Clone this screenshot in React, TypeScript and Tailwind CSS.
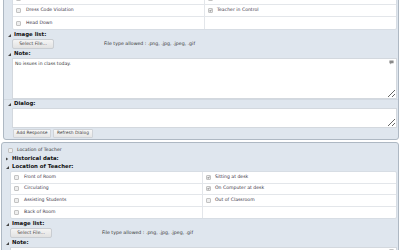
import React from "react";

const FONT = { fontFamily: '"DejaVu Sans", Verdana, sans-serif' };

function Box({ checked = false }: { checked?: boolean }) {
  return (
    <span className="inline-flex h-[5px] w-[5px] shrink-0 items-center justify-center rounded-[1px] border border-[#c2c2c2] bg-[#eeeeee]">
      {checked && (
        <svg viewBox="0 0 6 6" className="h-[5px] w-[5px]">
          <path d="M1 3.2 L2.4 4.6 L5 1.4" fill="none" stroke="#333" strokeWidth="1.2" />
        </svg>
      )}
    </span>
  );
}

function Arrow({ open = true }: { open?: boolean }) {
  return open ? (
    <svg viewBox="0 0 4 4" className="h-[3px] w-[3px] shrink-0">
      <path d="M4 0 L4 4 L0 4 Z" fill="#444" />
    </svg>
  ) : (
    <svg viewBox="0 0 4 4" className="h-[4px] w-[3px] shrink-0">
      <path d="M0 0 L3 2 L0 4 Z" fill="#444" />
    </svg>
  );
}

function Label({ text, open = true }: { text: string; open?: boolean }) {
  return (
    <div className="flex h-[8px] items-center gap-[3px] pl-[4px] text-[5.4px] font-bold leading-none text-[#111]">
      <Arrow open={open} />
      <span>{text}</span>
    </div>
  );
}

type Cell = { text: string; checked?: boolean } | null;

function Grid({ rows, rowH }: { rows: [Cell, Cell][]; rowH: string }) {
  return (
    <div className="ml-[8px] mr-[1px] rounded-[2px] border border-[#d7dde4] bg-white">
      {rows.map(([a, b], i) => (
        <div key={i} className={`flex ${rowH} ${i < rows.length - 1 ? "border-b border-[#e3e6ea]" : ""}`}>
          <div className="flex w-[192px] items-center gap-[5px] border-r border-[#e3e6ea] pl-[3px] text-[4.6px] leading-none text-[#3a3346]">
            {a && <Box checked={a.checked} />}
            {a && a.text && <span>{a.text}</span>}
          </div>
          <div className="flex flex-1 items-center gap-[4px] pl-[3px] text-[4.6px] leading-none text-[#3a3346]">
            {b && <Box checked={b.checked} />}
            {b && b.text && <span>{b.text}</span>}
          </div>
        </div>
      ))}
    </div>
  );
}

function FileRow() {
  return (
    <div className="flex h-[10px] items-center pl-[8px]">
      <button className="h-[10px] w-[42px] rounded-[2px] border border-[#c9cdd2] bg-gradient-to-b from-[#f4f4f4] to-[#e2e2e2] text-[4.6px] leading-none text-[#444]">
        Select File...
      </button>
      <span className="ml-[50px] text-[4.7px] leading-none text-[#333]">File type allowed : .png, .jpg, .jpeg, .gif</span>
    </div>
  );
}

function Bubble() {
  return (
    <svg viewBox="0 0 6 6" className="absolute right-[3px] top-[2px] h-[5px] w-[5px]">
      <path d="M0.5 0.5 H5.5 V3.8 H3 L1.6 5.5 V3.8 H0.5 Z" fill="#8a8a8a" />
    </svg>
  );
}

export default function App() {
  return (
    <div className="h-[250px] w-[400px] overflow-hidden bg-white" style={FONT}>
      <div className="-mt-[12px]">
        <div className="ml-[3px] mr-[1px] rounded-b-[3px] border border-[#aeb8c3] bg-[#dfe6ee] pt-[3px]">
          <Grid
            rowH="h-[12px]"
            rows={[
              [{ text: "" }, { text: "" }],
              [{ text: "Dress Code Violation" }, { text: "Teacher in Control", checked: true }],
              [{ text: "Head Down" }, null],
            ]}
          />
          <div className="mt-[1px]">
            <Label text="Image list:" />
          </div>
          <FileRow />
          <div className="mt-[1px]">
            <Label text="Note:" />
          </div>
          <div className="relative ml-[8px] mr-[1px] h-[41px]">
            <textarea
              readOnly
              defaultValue="No issues in class today."
              className="block h-full w-full resize-y border border-[#d3d8de] bg-white px-[2px] py-[2px] text-[4.6px] text-[#333] outline-none"
            />
            <Bubble />
          </div>
          <div className="border-t border-[#d2d9e1]">
            <Label text="Dialog:" />
          </div>
          <div className="ml-[8px] mr-[1px] h-[20px]">
            <textarea readOnly className="block h-full w-full resize-y border border-[#d3d8de] bg-white outline-none" />
          </div>
          <div className="mt-[1px] flex h-[10px] gap-[2px] pb-[1px] pl-[9px]">
            <button className="h-[9px] w-[38px] rounded-[1px] border border-[#cfd3d8] bg-gradient-to-b from-[#f7f7f7] to-[#e6e6e6] text-[4.4px] leading-none text-[#444]">
              Add Response
            </button>
            <button className="h-[9px] w-[40px] rounded-[1px] border border-[#cfd3d8] bg-gradient-to-b from-[#f7f7f7] to-[#e6e6e6] text-[4.4px] leading-none text-[#444]">
              Refresh Dialog
            </button>
          </div>
        </div>

        <div className="ml-[1px] mr-[1px] mt-[2px] rounded-[3px] border border-[#aeb8c3] bg-[#dfe6ee] pt-[3px]">
          <div className="flex h-[9px] items-center gap-[4px] pl-[6px] text-[4.6px] leading-none text-[#333]">
            <Box />
            <span>Location of Teacher</span>
          </div>
          <Label text="Historical data:" open={false} />
          <Label text="Location of Teacher:" />
          <Grid
            rowH="h-[11.5px]"
            rows={[
              [{ text: "Front of Room" }, { text: "Sitting at desk", checked: true }],
              [{ text: "Circulating" }, { text: "On Computer at desk", checked: true }],
              [{ text: "Assisting Students" }, { text: "Out of Classroom" }],
              [{ text: "Back of Room" }, null],
            ]}
          />
          <div className="mt-[1px]">
            <Label text="Image list:" />
          </div>
          <FileRow />
          <div className="mt-[1px]">
            <Label text="Note:" />
          </div>
          <div className="relative ml-[8px] mr-[1px] h-[41px]">
            <textarea
              readOnly
              defaultValue="Sitting at desk so you can manipulate the video."
              className="block h-full w-full resize-y border border-[#d3d8de] bg-white px-[2px] py-[2px] text-[4.6px] text-[#333] outline-none"
            />
            <Bubble />
          </div>
        </div>
      </div>
    </div>
  );
}
